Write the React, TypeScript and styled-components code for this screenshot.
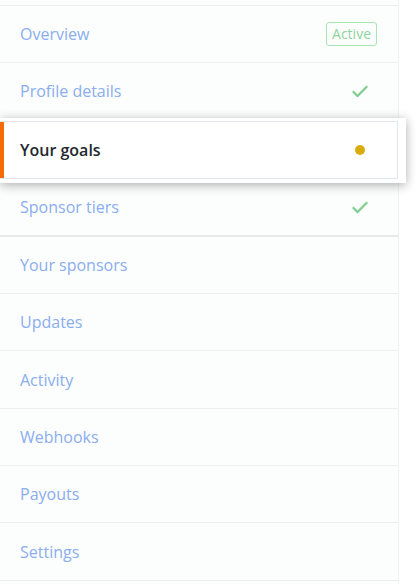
import styled, { createGlobalStyle } from "styled-components";

const GlobalStyle = createGlobalStyle`
  html, body {
    margin: 0;
    padding: 0;
    background: #ffffff;
  }
  body {
    font-family: "Open Sans", "Noto Sans", "Liberation Sans", sans-serif;
  }
`;

const Menu = styled.nav`
  width: 399px;
  padding-top: 5px;
  background: #fcfdfd;
  border-right: 1px solid #eef0f2;
  display: flex;
  flex-direction: column;
  height: 584px;
  box-sizing: border-box;
`;

const Row = styled.a<{ $thick?: boolean; $first?: boolean }>`
  display: flex;
  align-items: center;
  justify-content: space-between;
  height: 56.3px;
  padding: 0 21px 0 20px;
  border-top: ${(p) => (p.$first ? "1px solid #eceef0" : "none")};
  border-bottom: ${(p) => (p.$thick ? "2px solid #e6e8ea" : "1px solid #eceef0")};
  font-size: 16px;
  color: #8aaeef;
  text-decoration: none;
  flex-shrink: 0;
`;

const ActiveCard = styled.div`
  position: relative;
  z-index: 1;
  margin: -3px -8px -4px 0;
  padding: 3px 8px 4px 0;
  background: #ffffff;
  box-shadow: 0 2px 10px rgba(0, 0, 0, 0.32);
  flex-shrink: 0;
`;

const ActiveRow = styled.a`
  position: relative;
  display: flex;
  align-items: center;
  justify-content: space-between;
  height: 56px;
  padding: 0 21px 0 20px;
  border-top: 1px solid #e3e6ea;
  border-bottom: 1px solid #e3e6ea;
  border-right: 1px solid #e3e6ea;
  font-size: 16px;
  font-weight: 600;
  color: #24292e;
  text-decoration: none;

  &::before {
    content: "";
    position: absolute;
    left: 0;
    top: 0;
    bottom: 0;
    width: 4px;
    background: #f66a0a;
  }
`;

const Badge = styled.span`
  display: inline-flex;
  align-items: center;
  height: 22px;
  padding: 0 5px;
  border: 1px solid #a6e7b3;
  border-radius: 3px;
  font-size: 14px;
  color: #8fd49d;
  line-height: 1;
`;

const Check = styled.svg`
  width: 20px;
  height: 20px;
  margin-right: 7px;
  fill: #7fce91;
`;

const Dot = styled.span`
  width: 10px;
  height: 10px;
  border-radius: 50%;
  background: #dbab09;
  margin-right: 11px;
`;

const CheckIcon = () => (
  <Check viewBox="0 0 16 16">
    <path d="M13.78 4.22a.75.75 0 010 1.06l-7.25 7.25a.75.75 0 01-1.06 0L2.22 9.28a.75.75 0 011.06-1.06L6 10.94l6.72-6.72a.75.75 0 011.06 0z" stroke="#7fce91" strokeWidth="0.4" />
  </Check>
);

const plainItems = ["Your sponsors", "Updates", "Activity", "Webhooks", "Payouts", "Settings"];

export default function App() {
  return (
    <>
      <GlobalStyle />
      <Menu>
        <Row $first>
          Overview
          <Badge>Active</Badge>
        </Row>
        <Row>
          Profile details
          <CheckIcon />
        </Row>
        <ActiveCard>
          <ActiveRow>
            Your goals
            <Dot />
          </ActiveRow>
        </ActiveCard>
        <Row $thick>
          Sponsor tiers
          <CheckIcon />
        </Row>
        {plainItems.map((label) => (
          <Row key={label}>{label}</Row>
        ))}
      </Menu>
    </>
  );
}
